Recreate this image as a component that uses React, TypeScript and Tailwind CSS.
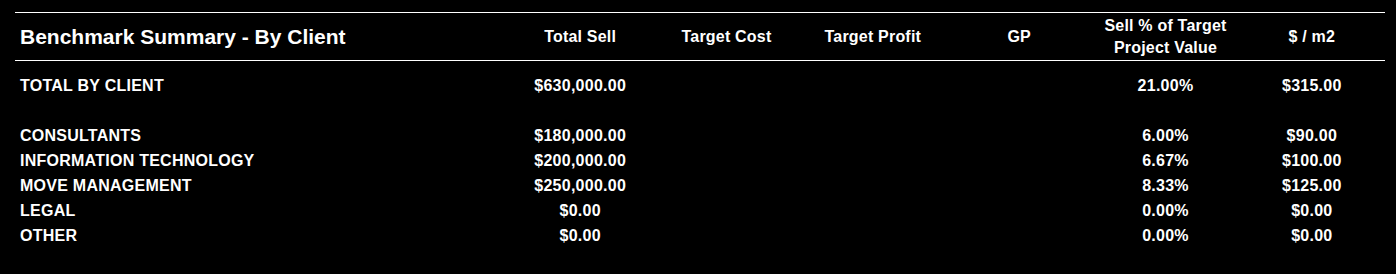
import React from "react";

type Row = { label: string; sell: string; pct: string; m2: string } | null;

const rows: Row[] = [
  { label: "TOTAL BY CLIENT", sell: "$630,000.00", pct: "21.00%", m2: "$315.00" },
  null,
  { label: "CONSULTANTS", sell: "$180,000.00", pct: "6.00%", m2: "$90.00" },
  { label: "INFORMATION TECHNOLOGY", sell: "$200,000.00", pct: "6.67%", m2: "$100.00" },
  { label: "MOVE MANAGEMENT", sell: "$250,000.00", pct: "8.33%", m2: "$125.00" },
  { label: "LEGAL", sell: "$0.00", pct: "0.00%", m2: "$0.00" },
  { label: "OTHER", sell: "$0.00", pct: "0.00%", m2: "$0.00" },
];

export default function App() {
  return (
    <div
      className="w-[1396px] h-[274px] bg-black text-white font-bold pt-[12px] pl-[15px] pr-[11px]"
      style={{ fontFamily: '"Liberation Sans", Arial, sans-serif' }}
    >
      <div className="border-t border-b border-white grid grid-cols-[492px_repeat(6,1fr)] h-[49px] items-center text-[16px] tracking-[0.2px]">
        <div className="pl-[5px] text-[21px] leading-none tracking-normal">Benchmark Summary - By Client</div>
        <div className="text-center leading-none">Total Sell</div>
        <div className="text-center leading-none">Target Cost</div>
        <div className="text-center leading-none">Target Profit</div>
        <div className="text-center leading-none">GP</div>
        <div className="text-center leading-[22px] pt-[1px]">
          Sell % of Target
          <br />
          Project Value
        </div>
        <div className="text-center leading-none">$ / m2</div>
      </div>
      <div className="pt-[12px] text-[16px] tracking-[0.25px]">
        {rows.map((r, i) =>
          r ? (
            <div key={i} className="grid grid-cols-[492px_repeat(6,1fr)] h-[25px] items-center leading-none">
              <div className="pl-[5px]">{r.label}</div>
              <div className="text-center">{r.sell}</div>
              <div />
              <div />
              <div />
              <div className="text-center">{r.pct}</div>
              <div className="text-center">{r.m2}</div>
            </div>
          ) : (
            <div key={i} className="h-[25px]" />
          )
        )}
      </div>
    </div>
  );
}
